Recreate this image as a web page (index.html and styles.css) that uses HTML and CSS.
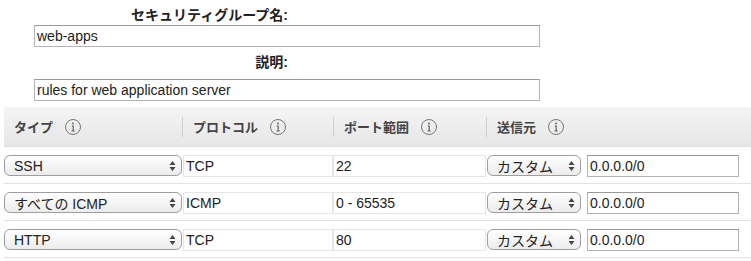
FILE: index.html
```html
<!DOCTYPE html>
<html lang="ja">
<head>
<meta charset="utf-8">
<link rel="stylesheet" href="styles.css">
</head>
<body>
<div class="form">
  <div class="label label-first">セキュリティグループ名:</div>
  <div class="text-input top-input">web-apps</div>
  <div class="label label-second">説明:</div>
  <div class="text-input top-input top-input-second">rules for web application server</div>
</div>

<div class="rules">
  <div class="thead">
    <div class="th"><div class="th-inner first">タイプ<svg class="info" width="16" height="16" viewBox="0 0 16 16"><circle cx="8" cy="8" r="7.5" fill="none" stroke="#777" stroke-width="1"/><circle cx="8" cy="4.6" r="1" fill="#666"/><path d="M6.8 7.2H8.2V11.8M6.6 11.8H9.6" fill="none" stroke="#666" stroke-width="1.2"/></svg></div></div>
    <div class="th"><div class="th-inner">プロトコル<svg class="info" width="16" height="16" viewBox="0 0 16 16"><circle cx="8" cy="8" r="7.5" fill="none" stroke="#777" stroke-width="1"/><circle cx="8" cy="4.6" r="1" fill="#666"/><path d="M6.8 7.2H8.2V11.8M6.6 11.8H9.6" fill="none" stroke="#666" stroke-width="1.2"/></svg></div></div>
    <div class="th"><div class="th-inner">ポート範囲<svg class="info" width="16" height="16" viewBox="0 0 16 16"><circle cx="8" cy="8" r="7.5" fill="none" stroke="#777" stroke-width="1"/><circle cx="8" cy="4.6" r="1" fill="#666"/><path d="M6.8 7.2H8.2V11.8M6.6 11.8H9.6" fill="none" stroke="#666" stroke-width="1.2"/></svg></div></div>
    <div class="th"><div class="th-inner">送信元<svg class="info" width="16" height="16" viewBox="0 0 16 16"><circle cx="8" cy="8" r="7.5" fill="none" stroke="#777" stroke-width="1"/><circle cx="8" cy="4.6" r="1" fill="#666"/><path d="M6.8 7.2H8.2V11.8M6.6 11.8H9.6" fill="none" stroke="#666" stroke-width="1.2"/></svg></div></div>
  </div>

  <div class="row">
    <div class="select type-select"><span>SSH</span><svg class="arrows" width="7" height="12" viewBox="0 0 7 12"><path d="M0.5 5L3.5 1L6.5 5Z M0.5 7L3.5 11L6.5 7Z" fill="#444"/></svg></div>
    <div class="text-input light proto">TCP</div>
    <div class="text-input light port">22</div>
    <div class="select src-select"><span>カスタム</span><svg class="arrows" width="7" height="12" viewBox="0 0 7 12"><path d="M0.5 5L3.5 1L6.5 5Z M0.5 7L3.5 11L6.5 7Z" fill="#444"/></svg></div>
    <div class="text-input cidr">0.0.0.0/0</div>
  </div>

  <div class="row">
    <div class="select type-select"><span>すべての ICMP</span><svg class="arrows" width="7" height="12" viewBox="0 0 7 12"><path d="M0.5 5L3.5 1L6.5 5Z M0.5 7L3.5 11L6.5 7Z" fill="#444"/></svg></div>
    <div class="text-input light proto">ICMP</div>
    <div class="text-input light port">0 - 65535</div>
    <div class="select src-select"><span>カスタム</span><svg class="arrows" width="7" height="12" viewBox="0 0 7 12"><path d="M0.5 5L3.5 1L6.5 5Z M0.5 7L3.5 11L6.5 7Z" fill="#444"/></svg></div>
    <div class="text-input cidr">0.0.0.0/0</div>
  </div>

  <div class="row">
    <div class="select type-select"><span>HTTP</span><svg class="arrows" width="7" height="12" viewBox="0 0 7 12"><path d="M0.5 5L3.5 1L6.5 5Z M0.5 7L3.5 11L6.5 7Z" fill="#444"/></svg></div>
    <div class="text-input light proto">TCP</div>
    <div class="text-input light port">80</div>
    <div class="select src-select"><span>カスタム</span><svg class="arrows" width="7" height="12" viewBox="0 0 7 12"><path d="M0.5 5L3.5 1L6.5 5Z M0.5 7L3.5 11L6.5 7Z" fill="#444"/></svg></div>
    <div class="text-input cidr">0.0.0.0/0</div>
  </div>
</div>
</body>
</html>
```

FILE: styles.css
```css
* { box-sizing: border-box; }

body {
  margin: 0;
  background: #ffffff;
  font-family: "Liberation Sans", "Noto Sans CJK JP", sans-serif;
  font-size: 14px;
  color: #222;
}

.form {
  padding-top: 6px;
}

.label {
  width: 288px;
  text-align: right;
  font-weight: bold;
  font-size: 14px;
  line-height: 18px;
  height: 18px;
  color: #222;
}

.text-input {
  height: 22px;
  line-height: 20px;
  padding-left: 2px;
  border: 1px solid #b4b4b4;
  border-top-color: #9a9a9a;
  background: #fff;
  white-space: nowrap;
  overflow: hidden;
  font-size: 14px;
  color: #222;
}

.top-input {
  margin-left: 34px;
  width: 506px;
  margin-top: 1px;
}

.label-second {
  margin-top: 6px;
}

.top-input-second {
  margin-top: 8px;
}

.rules {
  margin-top: 6px;
  margin-left: 4px;
}

.thead {
  display: grid;
  grid-template-columns: 178px 151px 153px 1fr;
  height: 40px;
  background: linear-gradient(#f4f4f4, #e7e7e7);
  border-bottom: 1px solid #dedede;
}

.th {
  display: flex;
  align-items: center;
}

.th-inner {
  display: flex;
  align-items: center;
  height: 20px;
  border-left: 1px solid #cfcfcf;
  padding-left: 10px;
  font-weight: bold;
  font-size: 13px;
  color: #444;
}

.th-inner.first {
  border-left: none;
  padding-left: 10px;
}

.info {
  margin-left: 12px;
  display: block;
}

.row {
  display: grid;
  grid-template-columns: 178px 151px 153px 95px 1fr;
  align-items: center;
  height: 37px;
  border-bottom: 1px solid #e4e4e4;
  padding-top: 1px;
  padding-right: 12px;
}

.select {
  display: flex;
  align-items: center;
  justify-content: space-between;
  height: 21px;
  border: 1px solid #9e9e9e;
  border-radius: 6px;
  background: linear-gradient(#ffffff, #ececec);
  padding: 0 5px 0 9px;
  font-size: 14px;
  color: #222;
  white-space: nowrap;
}

.arrows {
  display: block;
}

.src-select {
  margin-left: 1px;
}

.text-input.light {
  border: 1px solid #e6e6e6;
}

.proto {
  margin-left: 1px;
}

.port {
  margin-left: 0;
}

.cidr {
  margin-left: 6px;
  width: 152px;
  border-color: #b4b4b4;
  border-top-color: #9a9a9a;
}
```
